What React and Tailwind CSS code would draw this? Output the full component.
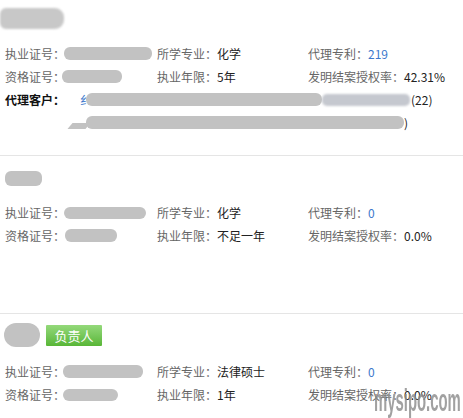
import React from 'react';

const font = { fontFamily: '"Microsoft YaHei", "Noto Sans CJK SC", "Noto Sans", sans-serif' };

function Blob({ className }) {
  return <span className={`inline-block bg-[#c2c2c2] rounded-[6px] blur-[0.6px] ${className}`} />;
}

function Field({ label, children, className = '' }) {
  return (
    <div className={`flex items-center shrink-0 ${className}`}>
      <span className="text-[#666]">{label}</span>
      {children}
    </div>
  );
}

function Row({ a, b, c }) {
  return (
    <div className="flex items-center h-[23px]">
      <div className="w-[152px] flex items-center">{a}</div>
      <div className="w-[151px] flex items-center">{b}</div>
      <div className="flex items-center">{c}</div>
    </div>
  );
}

function Lawyer({ nameBlob, badge, cert, qual, major, years, patents, rate, extra, top, bottom }) {
  return (
    <div className={`pl-[5px] ${bottom} border-b border-[#e5e5e5]`}>
      <div className={`flex items-center gap-[6px] ${top}`}>
        {nameBlob}
        {badge && (
          <span className="inline-flex items-center justify-center w-[56px] h-[21px] text-white text-[13px] bg-gradient-to-b from-[#94d97a] to-[#58b636] rounded-[1px]">
            负责人
          </span>
        )}
      </div>
      <Row
        a={<Field label="执业证号：">{cert}</Field>}
        b={<Field label="所学专业："><span className="text-[#222]">{major}</span></Field>}
        c={<Field label="代理专利："><span className="text-[#3b78cc]">{patents}</span></Field>}
      />
      <Row
        a={<Field label="资格证号：">{qual}</Field>}
        b={<Field label="执业年限："><span className="text-[#222]">{years}</span></Field>}
        c={<Field label="发明结案授权率："><span className="text-[#222]">{rate}</span></Field>}
      />
      {extra}
    </div>
  );
}

export default function App() {
  return (
    <div className="relative w-[463px] h-[418px] overflow-hidden bg-white text-[12px] leading-[23px]" style={font}>
      <Lawyer
        top="pt-[8px] mb-[13px]"
        bottom="pb-[21px]"
        nameBlob={<Blob className="w-[64px] h-[21px] -ml-[5px] rounded-r-[9px] bg-[#c8c8c8] blur-[1px]" />}
        cert={<Blob className="w-[88px] h-[13px] -ml-[1px] rounded-[4px]" />}
        qual={<Blob className="w-[60px] h-[13px] -ml-[3px]" />}
        major="化学"
        years="5年"
        patents="219"
        rate="42.31%"
        extra={
          <>
            <div className="flex items-center h-[23px]">
              <span className="font-bold text-[#111] w-[75px]">代理客户：</span>
              <span className="text-[#3b78cc]">纟</span>
              <Blob className="w-[236px] h-[13px] -ml-[6px] rounded-[6px]" />
              <span className="inline-block w-[88px] h-[12px] bg-[#c5c8cf] rounded-[5px] blur-[0.8px]" />
              <span className="text-[#222] ml-[1px]">(22)</span>
            </div>
            <div className="flex items-center h-[23px]">
              <span className="w-[65px]" />
              <span className="inline-block w-[18px] h-[6px] bg-[#c2c2c2] mt-[6px] skew-x-[-40deg]" />
              <Blob className="w-[318px] h-[13px] -ml-[2px] rounded-[6px]" />
              <span className="text-[#222]">)</span>
            </div>
          </>
        }
      />
      <Lawyer
        top="pt-[15px] mb-[15px]"
        bottom="pb-[66px]"
        nameBlob={<Blob className="w-[37px] h-[15px] rounded-[3px]" />}
        cert={<Blob className="w-[82px] h-[12px] -ml-[1px] rounded-[4px]" />}
        qual={<Blob className="w-[52px] h-[13px] rounded-[3px]" />}
        major="化学"
        years="不足一年"
        patents="0"
        rate="0.0%"
      />
      <Lawyer
        top="pt-[9px] mb-[13px]"
        bottom="pb-[20px] border-b-0"
        nameBlob={<Blob className="w-[36px] h-[24px] -ml-[1px] rounded-[12px]" />}
        badge
        cert={<Blob className="w-[80px] h-[13px] -ml-[2px] rounded-[3px]" />}
        qual={<Blob className="w-[55px] h-[12px] -ml-[2px] rounded-[6px]" />}
        major="法律硕士"
        years="1年"
        patents="0"
        rate="0.0%"
      />
      <div
        className="absolute left-[374px] top-[385px] text-[31px] font-bold text-[#8a8a8a]/80 leading-none scale-x-[0.48] origin-left whitespace-nowrap"
        style={{ fontFamily: '"Liberation Sans", Arial, sans-serif' }}
      >
        mysipo.com
      </div>
    </div>
  );
}
